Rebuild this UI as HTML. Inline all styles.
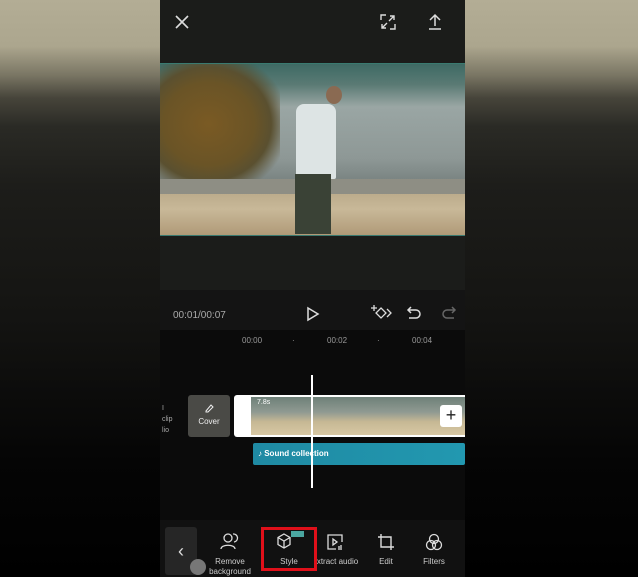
<!DOCTYPE html>
<html><head><meta charset="utf-8"><style>
*{margin:0;padding:0;box-sizing:border-box}
body{width:638px;height:577px;overflow:hidden;background:#000;font-family:"Liberation Sans",sans-serif;position:relative}
.side{position:absolute;top:0;height:577px;width:160px;background:linear-gradient(#b3ad95 0%,#aca68e 8%,#7a7664 13%,#46443a 17%,#2a2a25 22%,#1d1d1a 32%,#141412 55%,#050505 80%,#000 100%)}
.phone{position:absolute;left:160px;top:0;width:305px;height:577px;background:#1b1c1a}
.a{position:absolute}
.t{color:#bbb;font-size:9px}
</style></head><body>
<div class="side" style="left:0"></div>
<div class="side" style="left:465px;width:173px"></div>
<div class="phone">
 <svg class="a" style="left:14px;top:14px" width="16" height="16" viewBox="0 0 16 16"><path d="M2 2L14 14M14 2L2 14" stroke="#ddd" stroke-width="1.6"/></svg>
 <svg class="a" style="left:220px;top:14px" width="16" height="16" viewBox="0 0 16 16" fill="none" stroke="#ddd" stroke-width="1.4"><path d="M1 6V1H6M10 15H15V10M9 7L14 2M10 2H14V6M7 9L2 14M2 10V14H6"/></svg>
 <svg class="a" style="left:267px;top:13px" width="16" height="18" viewBox="0 0 16 18" fill="none" stroke="#ddd" stroke-width="1.5"><path d="M8 13V2M3 7L8 2L13 7M2 16H14"/></svg>
 <div class="a" style="left:0;top:63px;width:305px;height:173px;overflow:hidden;border-top:1px solid #3a7a70;border-bottom:1px solid #3a7a70;background:linear-gradient(#3e6a64 0%,#5a7a74 12%,#9aa6a4 25%,#8e9896 55%,#7a8482 68%,#8a8a80 70%,#b8a888 73%,#c8b898 85%,#b09a78 100%)">
  <div class="a" style="left:-10px;top:-5px;width:130px;height:130px;background:radial-gradient(ellipse at 45% 50%,#7a5a24 0%,#6a5426 45%,#5a5030 62%,rgba(80,80,60,0) 80%)"></div>
  <div class="a" style="left:0;top:115px;width:305px;height:15px;background:#8e8e84"></div>
  <div class="a" style="left:136px;top:40px;width:40px;height:75px;background:#dde4e4;border-radius:8px 8px 2px 2px"></div>
  <div class="a" style="left:135px;top:110px;width:36px;height:60px;background:#3a4236"></div>
  <div class="a" style="left:166px;top:22px;width:16px;height:18px;background:#8a6a52;border-radius:50%"></div>
 </div>
 <div class="a" style="left:0;top:290px;width:305px;height:287px;background:#141414"></div>
 <div class="a" style="left:0;top:330px;width:305px;height:247px;background:#0b0b0b"></div>
 <div class="a t" style="left:13px;top:310px;font-size:10px;color:#aaa">00:01/00:07</div>
 <svg class="a" style="left:146px;top:306px" width="14" height="16" viewBox="0 0 14 16"><path d="M2 2L12 8L2 14Z" fill="none" stroke="#ddd" stroke-width="1.5"/></svg>
 <svg class="a" style="left:210px;top:304px" width="22" height="18" viewBox="0 0 22 18" fill="none" stroke="#ddd" stroke-width="1.3"><path d="M4 1V7M1 4H7M11 4L16 9L11 14L6 9ZM17 5L21 9L17 13"/></svg>
 <svg class="a" style="left:246px;top:306px" width="16" height="14" viewBox="0 0 16 14" fill="none" stroke="#ddd" stroke-width="1.5"><path d="M5 1L2 4L5 7M2 4H10A4 4 0 0 1 10 12H3"/></svg>
 <svg class="a" style="left:281px;top:306px" width="16" height="14" viewBox="0 0 16 14" fill="none" stroke="#666" stroke-width="1.5"><path d="M11 1L14 4L11 7M14 4H6A4 4 0 0 0 6 12H13"/></svg>
 <div class="a t" style="left:82px;top:336px;font-size:8px;color:#999">00:00</div>
 <div class="a t" style="left:132px;top:336px;font-size:8px;color:#999">·</div>
 <div class="a t" style="left:167px;top:336px;font-size:8px;color:#999">00:02</div>
 <div class="a t" style="left:217px;top:336px;font-size:8px;color:#999">·</div>
 <div class="a t" style="left:252px;top:336px;font-size:8px;color:#999">00:04</div>
 <div class="a t" style="left:2px;top:403px;font-size:7px;color:#aaa;line-height:11px">I<br>clip<br>lio</div>
 <div class="a" style="left:28px;top:395px;width:42px;height:42px;background:#4a4a46;border-radius:3px"></div>
 <svg class="a" style="left:44px;top:403px" width="10" height="10" viewBox="0 0 10 10" fill="none" stroke="#eee" stroke-width="1"><path d="M2 8L7 2L9 4L4 9H2Z"/></svg>
 <div class="a" style="left:29px;top:417px;width:40px;text-align:center;color:#eee;font-size:8px">Cover</div>
 <div class="a" style="left:74px;top:395px;width:231px;height:42px;background:#fff;border-radius:3px 0 0 3px"></div>
 <div class="a" style="left:91px;top:397px;width:214px;height:38px;background:linear-gradient(#6e8078 0%,#909a92 40%,#c6b894 65%,#d8c8a4 100%)"></div>
 <div class="a" style="left:97px;top:399px;color:#fff;font-size:7px">7.8s</div>
 <div class="a" style="left:280px;top:405px;width:22px;height:22px;background:#fff;border-radius:3px;color:#222;font-size:18px;line-height:20px;text-align:center">+</div>
 <div class="a" style="left:93px;top:443px;width:212px;height:22px;background:linear-gradient(90deg,#1f8aa3,#2298b0);border-radius:2px"></div>
 <div class="a" style="left:98px;top:449px;color:#fff;font-size:8px;font-weight:bold">♪ Sound collection</div>
 <div class="a" style="left:151px;top:375px;width:2px;height:113px;background:#fff"></div>
 <div class="a" style="left:0;top:520px;width:305px;height:57px;background:#111"></div>
 <div class="a" style="left:5px;top:527px;width:32px;height:48px;background:#262626;border-radius:3px;color:#ddd;font-size:18px;text-align:center;line-height:48px">‹</div>
 <div class="a" style="left:30px;top:559px;width:16px;height:16px;border-radius:50%;background:#777"></div>
 <svg class="a" style="left:60px;top:532px" width="20" height="18" viewBox="0 0 20 18" fill="none" stroke="#ddd" stroke-width="1.3"><circle cx="8" cy="6" r="4"/><path d="M1 17C1 12 15 12 15 17M13 2A4 4 0 0 1 14 10"/></svg>
 <div class="a" style="left:40px;top:557px;width:60px;text-align:center;color:#ccc;font-size:8px;line-height:10px">Remove<br>background</div>
 <div class="a" style="left:101px;top:527px;width:56px;height:44px;border:3px solid #e0101a"></div>
 <div class="a" style="left:131px;top:531px;width:13px;height:6px;background:#4aa6a0"></div>
 <svg class="a" style="left:116px;top:533px" width="16" height="16" viewBox="0 0 16 16" fill="none" stroke="#ddd" stroke-width="1.3"><path d="M8 1L14 4.5V11.5L8 15L2 11.5V4.5ZM2 4.5L8 8L14 4.5M8 8V15"/></svg>
 <div class="a" style="left:101px;top:557px;width:56px;text-align:center;color:#ccc;font-size:8px">Style</div>
 <svg class="a" style="left:166px;top:533px" width="18" height="18" viewBox="0 0 18 18" fill="none" stroke="#ddd" stroke-width="1.3"><path d="M10 16H2V2H16V9M7 6L11 9L7 12Z M13 13V17M15 12V17"/></svg>
 <div class="a" style="left:150px;top:557px;width:55px;text-align:center;color:#ccc;font-size:8px">xtract audio</div>
 <svg class="a" style="left:217px;top:533px" width="18" height="18" viewBox="0 0 18 18" fill="none" stroke="#ddd" stroke-width="1.4"><path d="M4 1V14H17M1 4H14V17"/></svg>
 <div class="a" style="left:210px;top:557px;width:32px;text-align:center;color:#ccc;font-size:8px">Edit</div>
 <svg class="a" style="left:265px;top:533px" width="18" height="18" viewBox="0 0 18 18" fill="none" stroke="#ddd" stroke-width="1.3"><circle cx="9" cy="6" r="4.5"/><circle cx="6" cy="12" r="4.5"/><circle cx="12" cy="12" r="4.5"/></svg>
 <div class="a" style="left:255px;top:557px;width:38px;text-align:center;color:#ccc;font-size:8px">Filters</div>
</div>
</body></html>
